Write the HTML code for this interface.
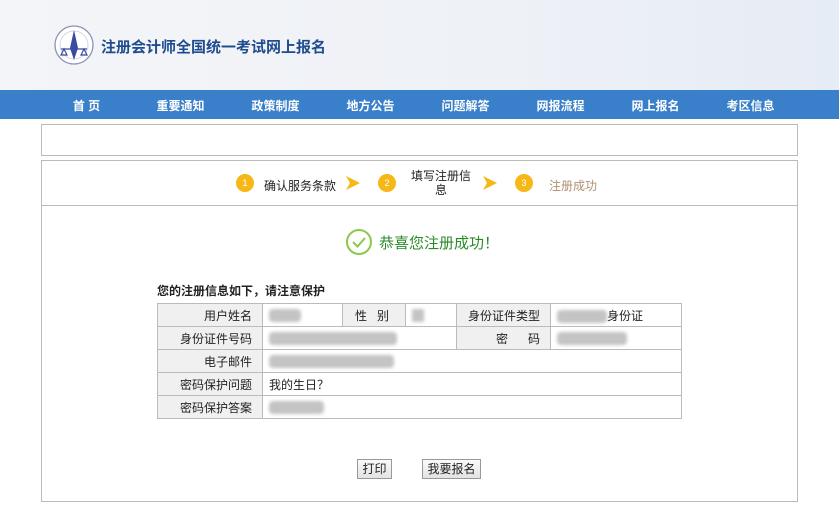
<!DOCTYPE html>
<html><head><meta charset="utf-8"><style>
*{margin:0;padding:0;box-sizing:border-box}
body{width:839px;height:507px;overflow:hidden;background:#fff;font-family:"Liberation Sans","Noto Sans CJK SC",sans-serif;position:relative;font-size:12px;color:#222}
.hd{position:absolute;left:0;top:0;width:839px;height:90px;background:linear-gradient(90deg,#f4f5f8,#eef1f6 60%,#e6ecf5)}
.title{position:absolute;left:101px;top:36px;font-size:15px;font-weight:bold;color:#1e4c8e;letter-spacing:0}
.nav{position:absolute;left:0;top:90px;width:839px;height:29px;background:#3a7fc9}
.nav span{position:absolute;top:7px;width:95px;margin-left:-47px;text-align:center;color:#fff;font-weight:bold;font-size:12px}
.box{position:absolute;border:1px solid #bbb;left:41px;width:757px}
.ab{position:absolute}
table{position:absolute;left:157px;top:303px;border-collapse:collapse;width:525px}
td{border:1px solid #bbb;height:23px;font-size:12px;padding:0 6px}
td.l{background:#f0f0f0;text-align:right;padding-right:10px}
.blur{display:inline-block;height:13px;background:#c4c4c4;border-radius:4px;filter:blur(1.5px);vertical-align:middle}
.btn{position:absolute;top:459px;height:20px;border:1px solid #999;background:linear-gradient(#fafafa,#e3e3e3);font-size:12px;text-align:center;line-height:18px}
.num{position:absolute;width:18px;height:18px;border-radius:50%;background:#f6b817;color:#fff;font-size:9px;text-align:center;line-height:18px;top:174px}
.arr{position:absolute;top:176px}
</style></head><body>
<div class="hd"></div>
<svg class="ab" style="left:53px;top:24px" width="42" height="42" viewBox="0 0 42 42">
<circle cx="21" cy="21" r="19" fill="#fff" stroke="#8c92b8" stroke-width="1.3"/>
<circle cx="21" cy="21" r="14" fill="none" stroke="#c8cce0" stroke-width="0.8"/>
<path d="M21 6 L25 24 L21 36 L17 24 Z" fill="#3a4aa0"/>
<path d="M8 25 L34 25 M11 25 L8 31 L14 31 Z M31 25 L28 31 L34 31 Z" stroke="#3a4aa0" fill="none" stroke-width="1.2"/>
</svg>
<div class="title">注册会计师全国统一考试网上报名</div>
<div class="nav">
<span style="left:86px">首 页</span><span style="left:180px">重要通知</span><span style="left:275px">政策制度</span><span style="left:370px">地方公告</span><span style="left:465px">问题解答</span><span style="left:560px">网报流程</span><span style="left:655px">网上报名</span><span style="left:750px">考区信息</span>
</div>
<div class="box" style="top:124px;height:32px"></div>
<div class="box" style="top:160px;height:342px"></div>
<div class="ab" style="left:42px;top:205px;width:755px;height:1px;background:#bbb"></div>
<div class="num" style="left:236px">1</div>
<div class="ab" style="left:264px;top:177px">确认服务条款</div>
<svg class="arr" style="left:346px" width="14" height="14" viewBox="0 0 14 14"><path d="M0 0 L14 7 L0 14 L4 7 Z" fill="#f6b817"/></svg>
<div class="num" style="left:378px">2</div>
<div class="ab" style="left:410px;top:169px;width:62px;text-align:center;line-height:14px">填写注册信<br>息</div>
<svg class="arr" style="left:483px" width="14" height="14" viewBox="0 0 14 14"><path d="M0 0 L14 7 L0 14 L4 7 Z" fill="#f6b817"/></svg>
<div class="num" style="left:515px">3</div>
<div class="ab" style="left:549px;top:177px;color:#b09070">注册成功</div>
<svg class="ab" style="left:345px;top:228px" width="28" height="28" viewBox="0 0 28 28"><circle cx="14" cy="14" r="12" fill="none" stroke="#8cc84b" stroke-width="2"/><path d="M8 14 L12.5 18.5 L20 10" fill="none" stroke="#8cc84b" stroke-width="2"/></svg>
<div class="ab" style="left:379px;top:232px;font-size:15px;color:#2a8a2a">恭喜您注册成功！</div>
<div class="ab" style="left:157px;top:282px;font-weight:bold">您的注册信息如下，请注意保护</div>
<table>
<tr><td class="l" style="width:105px">用户姓名</td><td style="width:80px"><span class="blur" style="width:32px"></span></td><td class="l" style="width:63px;text-align:center">性&nbsp;&nbsp;&nbsp;别</td><td style="width:51px"><span class="blur" style="width:12px;border-radius:1px"></span></td><td class="l" style="width:94px">身份证件类型</td><td><span class="blur" style="width:50px"></span>身份证</td></tr>
<tr><td class="l">身份证件号码</td><td colspan="3"><span class="blur" style="width:128px"></span></td><td class="l">密&nbsp;&nbsp;&nbsp;&nbsp;&nbsp;&nbsp;码</td><td><span class="blur" style="width:70px"></span></td></tr>
<tr><td class="l">电子邮件</td><td colspan="5"><span class="blur" style="width:125px"></span></td></tr>
<tr><td class="l">密码保护问题</td><td colspan="5">我的生日？</td></tr>
<tr><td class="l">密码保护答案</td><td colspan="5"><span class="blur" style="width:55px"></span></td></tr>
</table>
<div class="btn" style="left:357px;width:35px">打印</div>
<div class="btn" style="left:422px;width:59px">我要报名</div>
</body></html>
